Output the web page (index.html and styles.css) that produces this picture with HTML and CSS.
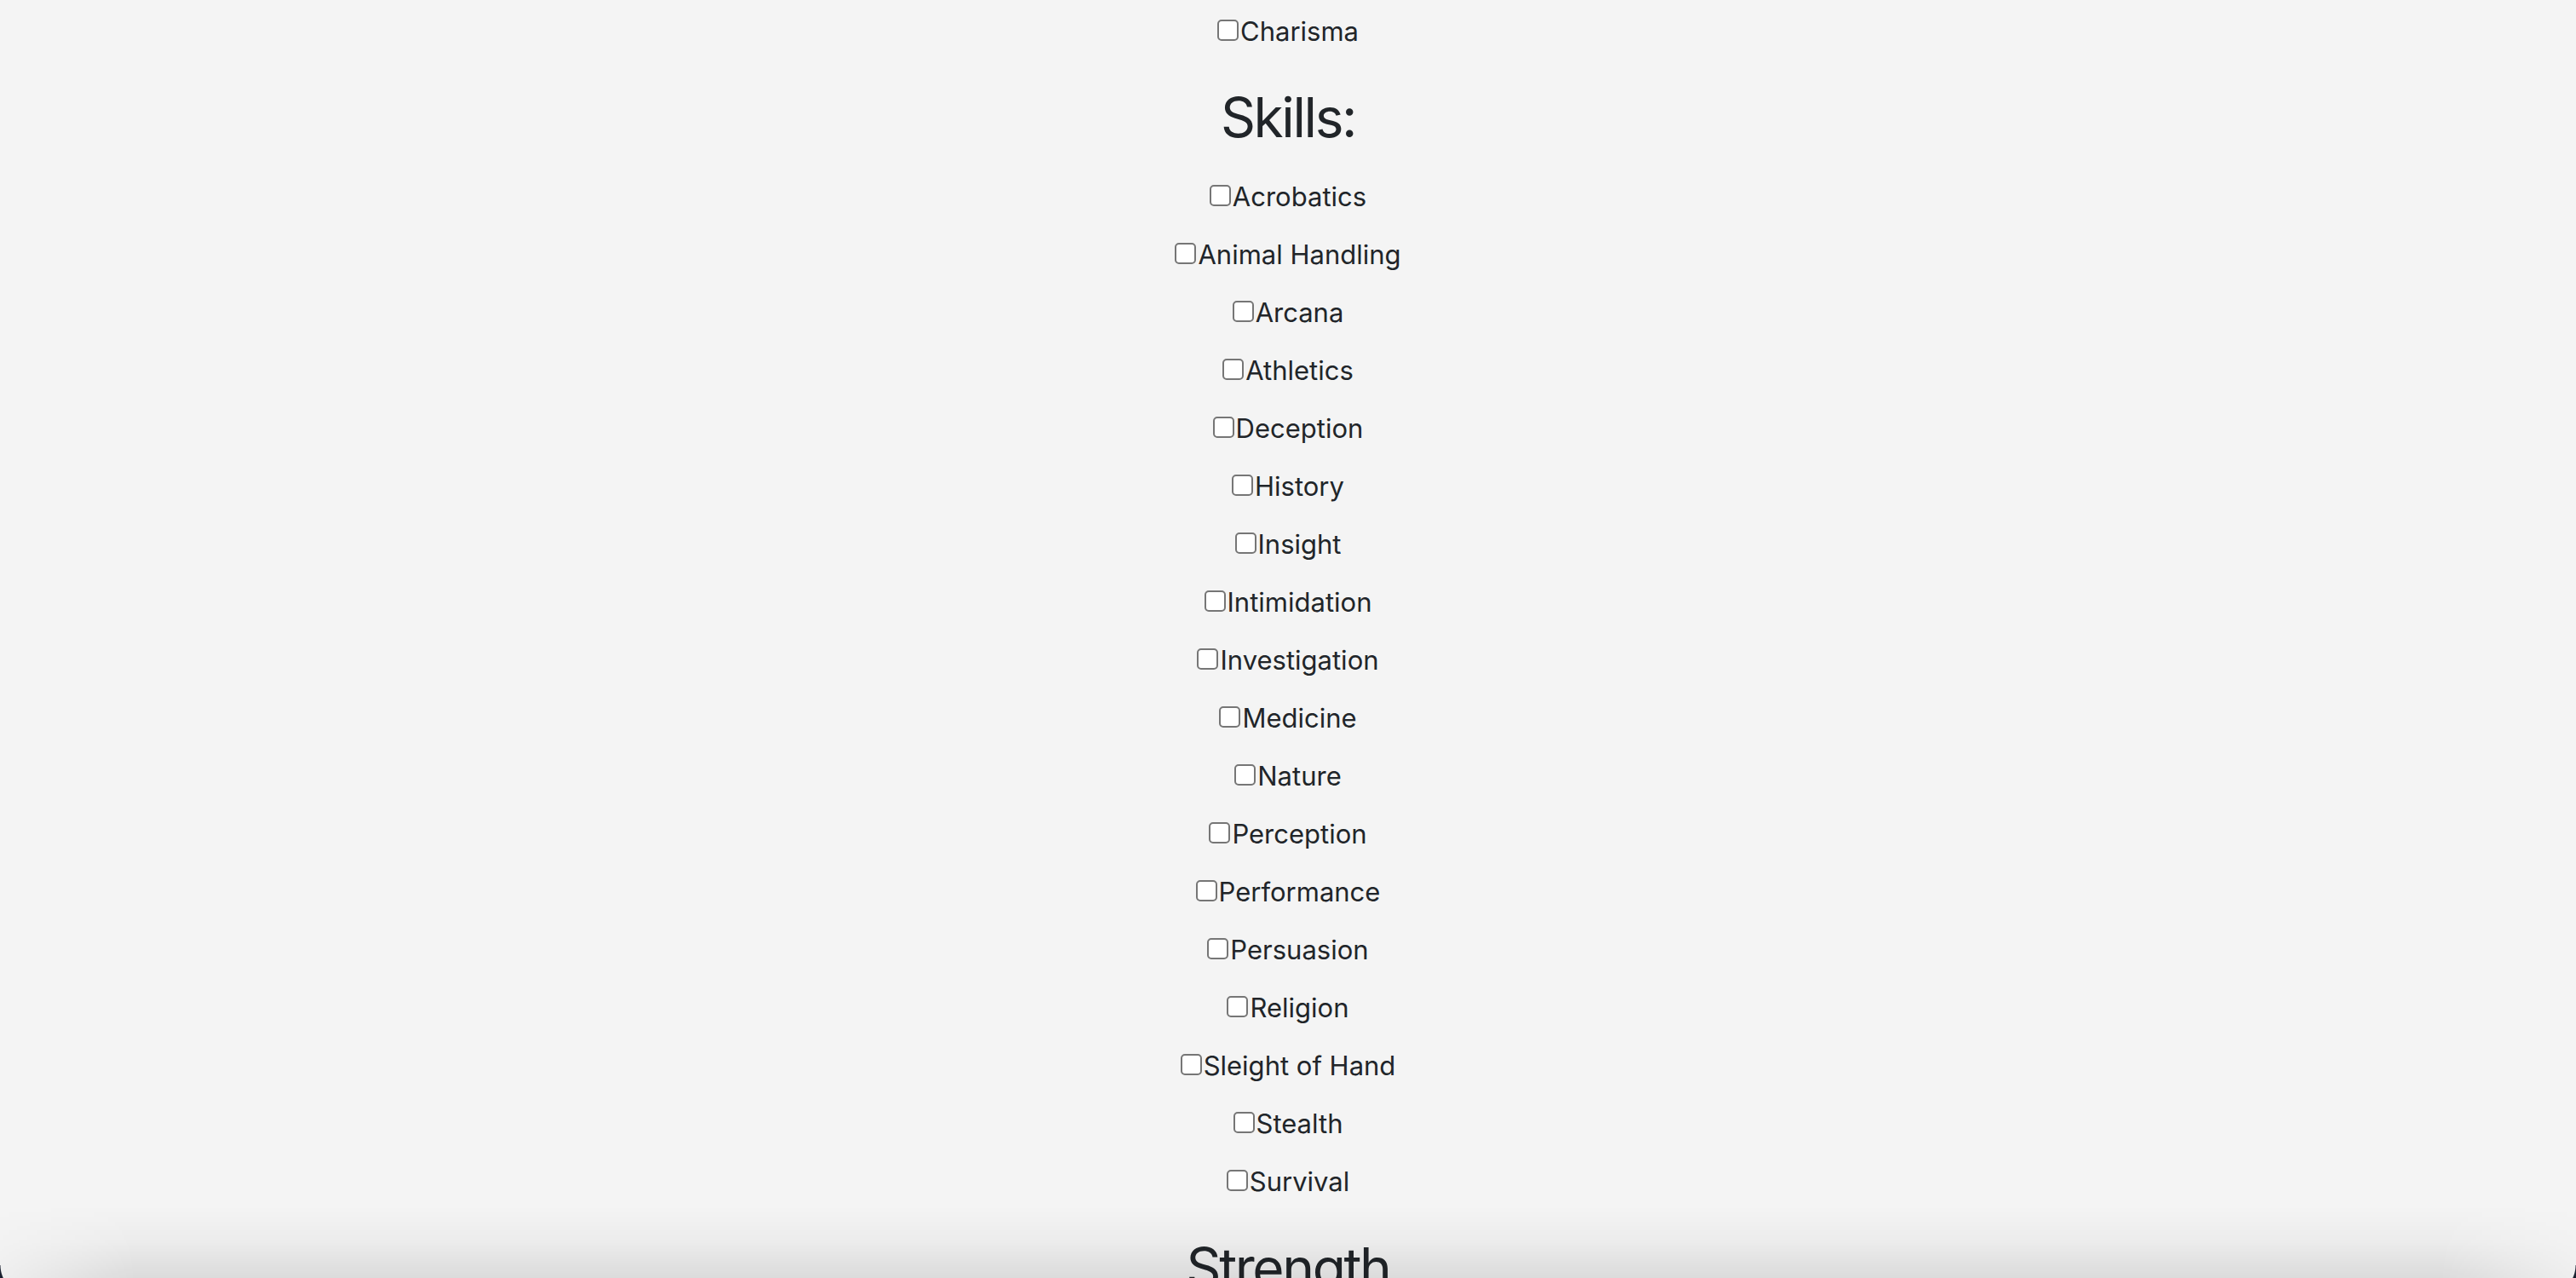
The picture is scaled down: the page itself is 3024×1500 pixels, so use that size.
FILE: index.html
```html
<!DOCTYPE html>
<html lang="en">
<head>
<meta charset="utf-8">
<title>Character Sheet</title>
<link rel="stylesheet" href="styles.css">
</head>
<body>
<div class="window">
  <section class="group">
    <label class="opt"><input type="checkbox" class="box">Charisma</label>
  </section>
  <section class="group">
    <h2 class="title">Skills:</h2>
    <label class="opt"><input type="checkbox" class="box">Acrobatics</label>
    <label class="opt"><input type="checkbox" class="box">Animal Handling</label>
    <label class="opt"><input type="checkbox" class="box">Arcana</label>
    <label class="opt"><input type="checkbox" class="box">Athletics</label>
    <label class="opt"><input type="checkbox" class="box">Deception</label>
    <label class="opt"><input type="checkbox" class="box">History</label>
    <label class="opt"><input type="checkbox" class="box">Insight</label>
    <label class="opt"><input type="checkbox" class="box">Intimidation</label>
    <label class="opt"><input type="checkbox" class="box">Investigation</label>
    <label class="opt"><input type="checkbox" class="box">Medicine</label>
    <label class="opt"><input type="checkbox" class="box">Nature</label>
    <label class="opt"><input type="checkbox" class="box">Perception</label>
    <label class="opt"><input type="checkbox" class="box">Performance</label>
    <label class="opt"><input type="checkbox" class="box">Persuasion</label>
    <label class="opt"><input type="checkbox" class="box">Religion</label>
    <label class="opt"><input type="checkbox" class="box">Sleight of Hand</label>
    <label class="opt"><input type="checkbox" class="box">Stealth</label>
    <label class="opt"><input type="checkbox" class="box">Survival</label>
  </section>
  <section class="group">
    <h2 class="title">Strength</h2>
  </section>
</div>
<div class="shade"></div>
<div class="corner corner-left"></div>
<div class="corner corner-right"></div>
</body>
</html>
```
FILE: styles.css
```css
html {
  background: #f4f4f4;
}
body {
  margin: 0;
  height: 1500px;
  overflow: hidden;
  position: relative;
  font-family: Inter, "Noto Sans", sans-serif;
  color: #212529;
  background: #f4f4f4;
}
.window {
  padding-top: 3px;
  text-align: center;
}
.group {
  display: flex;
  flex-direction: column;
  align-items: center;
}
.opt {
  display: block;
  font-size: 31px;
  line-height: 68px;
  height: 68px;
}
.box {
  appearance: none;
  -webkit-appearance: none;
  width: 25px;
  height: 25px;
  margin: 0 2px 0 0;
  border: 2px solid #767676;
  border-radius: 5px;
  background: #ffffff;
  vertical-align: baseline;
  box-sizing: border-box;
}
.title {
  font-size: 64px;
  font-weight: 400;
  letter-spacing: -2.4px;
  line-height: 1.2;
  margin: 29px 0 20px;
}
.shade {
  position: absolute;
  left: 0;
  right: 0;
  bottom: 0;
  height: 85px;
  background: linear-gradient(to bottom, rgba(0,0,0,0) 0%, rgba(0,0,0,0.03) 50%, rgba(0,0,0,0.1) 100%);
  -webkit-mask-image: linear-gradient(to right, rgba(0,0,0,0.2) 0, #000 160px, #000 calc(100% - 160px), rgba(0,0,0,0.2) 100%);
  mask-image: linear-gradient(to right, rgba(0,0,0,0.2) 0, #000 160px, #000 calc(100% - 160px), rgba(0,0,0,0.2) 100%);
  pointer-events: none;
}
.corner {
  position: absolute;
  bottom: -21px;
  width: 36px;
  height: 36px;
  pointer-events: none;
}
.corner-left {
  left: 0;
  background: radial-gradient(circle at 36px 0, transparent 35px, #1b2231 36px);
}
.corner-right {
  right: 0;
  background: radial-gradient(circle at 0 0, transparent 35px, #1b2231 36px);
}
```
